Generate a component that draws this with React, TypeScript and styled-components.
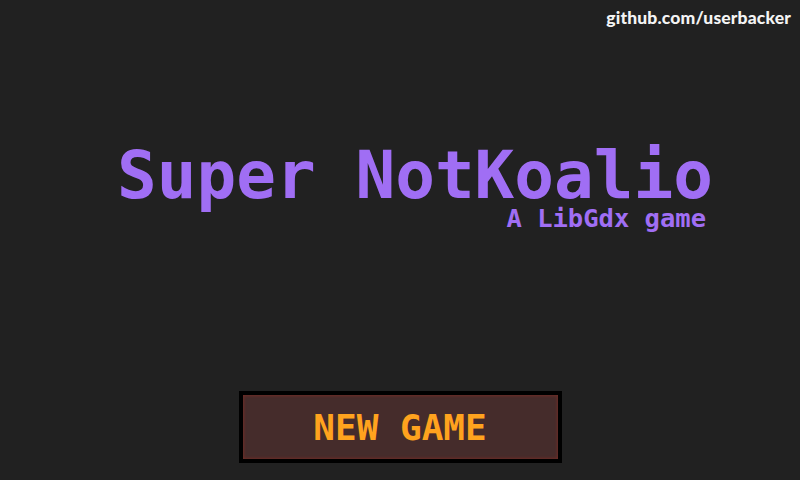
import React from "react";
import styled, { createGlobalStyle } from "styled-components";

const Global = createGlobalStyle`
  html, body { margin: 0; padding: 0; background: #212121; }
  #root { width: 800px; height: 480px; }
`;

const Screen = styled.div`
  width: 800px;
  height: 480px;
  background: #212121;
  display: flex;
  flex-direction: column;
  overflow: hidden;
`;

const TopBar = styled.div`
  display: flex;
  justify-content: flex-end;
  padding: 6px 9px 0 0;
  height: 24px;
`;

const Credit = styled.span`
  font-family: "Lato", "Open Sans", sans-serif;
  font-weight: 900;
  font-size: 17.5px;
  letter-spacing: 0.15px;
  color: #f4f4f4;
  line-height: 24px;
`;

const TitleArea = styled.div`
  display: flex;
  padding: 117px 0 0 117px;
`;

const TitleBlock = styled.div`
  display: flex;
  flex-direction: column;
  align-items: flex-end;
  font-family: "DejaVu Sans Mono", monospace;
  font-weight: bold;
  color: #a06ef4;
`;

const Title = styled.h1`
  margin: 0;
  font-size: 66px;
  line-height: 58px;
  font-weight: bold;
`;

const Subtitle = styled.div`
  font-size: 25.5px;
  line-height: 26px;
  margin-right: 7px;
`;

const ButtonRow = styled.div`
  display: flex;
  justify-content: center;
  margin-top: 160px;
`;

const Button = styled.button`
  width: 323px;
  height: 72px;
  box-sizing: border-box;
  border: 4px solid #000;
  background: #452c2b;
  box-shadow: inset 0 0 3px 1px #6e2c26;
  color: #ffa31e;
  font-family: "DejaVu Sans Mono", monospace;
  font-weight: bold;
  font-size: 36px;
  padding: 0;
  cursor: pointer;
  display: flex;
  align-items: center;
  justify-content: center;
`;

export default function App() {
  return (
    <Screen>
      <Global />
      <TopBar>
        <Credit>github.com/userbacker</Credit>
      </TopBar>
      <TitleArea>
        <TitleBlock>
          <Title>Super NotKoalio</Title>
          <Subtitle>A LibGdx game</Subtitle>
        </TitleBlock>
      </TitleArea>
      <ButtonRow>
        <Button>NEW GAME</Button>
      </ButtonRow>
    </Screen>
  );
}
